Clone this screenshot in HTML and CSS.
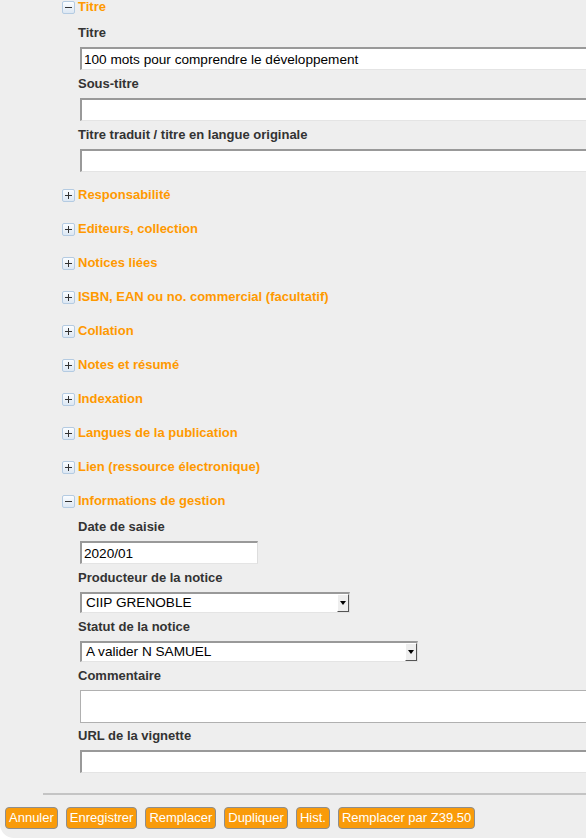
FILE: index.html
```html
<!DOCTYPE html>
<html lang="fr">
<head>
<meta charset="utf-8">
<title>Notice</title>
<link rel="stylesheet" href="styles.css">
</head>
<body>
<div class="page">
  <div class="form">
    <section class="sec open">
      <div class="sec-head"><span class="tog"><svg viewBox="0 0 13 13" width="13" height="13"><path d="M3 6.5h7" stroke="#333" stroke-width="1"/></svg></span><span>Titre</span></div>
      <div class="sec-body">
        <div class="lbl">Titre</div>
        <input class="inp wide" type="text" value="100 mots pour comprendre le développement">
        <div class="lbl">Sous-titre</div>
        <input class="inp wide" type="text" value="">
        <div class="lbl">Titre traduit / titre en langue originale</div>
        <input class="inp wide last" type="text" value="">
      </div>
    </section>

    <section class="sec"><div class="sec-head"><span class="tog"><svg viewBox="0 0 13 13" width="13" height="13"><path d="M3 6.5h7M6.5 3v7" stroke="#333" stroke-width="1"/></svg></span><span>Responsabilité</span></div></section>
    <section class="sec"><div class="sec-head"><span class="tog"><svg viewBox="0 0 13 13" width="13" height="13"><path d="M3 6.5h7M6.5 3v7" stroke="#333" stroke-width="1"/></svg></span><span>Editeurs, collection</span></div></section>
    <section class="sec"><div class="sec-head"><span class="tog"><svg viewBox="0 0 13 13" width="13" height="13"><path d="M3 6.5h7M6.5 3v7" stroke="#333" stroke-width="1"/></svg></span><span>Notices liées</span></div></section>
    <section class="sec"><div class="sec-head"><span class="tog"><svg viewBox="0 0 13 13" width="13" height="13"><path d="M3 6.5h7M6.5 3v7" stroke="#333" stroke-width="1"/></svg></span><span>ISBN, EAN ou no. commercial (facultatif)</span></div></section>
    <section class="sec"><div class="sec-head"><span class="tog"><svg viewBox="0 0 13 13" width="13" height="13"><path d="M3 6.5h7M6.5 3v7" stroke="#333" stroke-width="1"/></svg></span><span>Collation</span></div></section>
    <section class="sec"><div class="sec-head"><span class="tog"><svg viewBox="0 0 13 13" width="13" height="13"><path d="M3 6.5h7M6.5 3v7" stroke="#333" stroke-width="1"/></svg></span><span>Notes et résumé</span></div></section>
    <section class="sec"><div class="sec-head"><span class="tog"><svg viewBox="0 0 13 13" width="13" height="13"><path d="M3 6.5h7M6.5 3v7" stroke="#333" stroke-width="1"/></svg></span><span>Indexation</span></div></section>
    <section class="sec"><div class="sec-head"><span class="tog"><svg viewBox="0 0 13 13" width="13" height="13"><path d="M3 6.5h7M6.5 3v7" stroke="#333" stroke-width="1"/></svg></span><span>Langues de la publication</span></div></section>
    <section class="sec"><div class="sec-head"><span class="tog"><svg viewBox="0 0 13 13" width="13" height="13"><path d="M3 6.5h7M6.5 3v7" stroke="#333" stroke-width="1"/></svg></span><span>Lien (ressource électronique)</span></div></section>

    <section class="sec open final">
      <div class="sec-head"><span class="tog"><svg viewBox="0 0 13 13" width="13" height="13"><path d="M3 6.5h7" stroke="#333" stroke-width="1"/></svg></span><span>Informations de gestion</span></div>
      <div class="sec-body">
        <div class="lbl">Date de saisie</div>
        <input class="inp date" type="text" value="2020/01">
        <div class="lbl">Producteur de la notice</div>
        <div class="sel sel-prod"><span class="sel-txt">CIIP GRENOBLE</span><span class="arr"></span></div>
        <div class="lbl">Statut de la notice</div>
        <div class="sel sel-stat"><span class="sel-txt">A valider N SAMUEL</span><span class="arr"></span></div>
        <div class="lbl">Commentaire</div>
        <textarea class="area"></textarea>
        <div class="lbl">URL de la vignette</div>
        <input class="inp wide last" type="text" value="">
      </div>
    </section>
  </div>
  <div class="rule"></div>
  <div class="buttons">
    <button class="btn">Annuler</button>
    <button class="btn">Enregistrer</button>
    <button class="btn">Remplacer</button>
    <button class="btn">Dupliquer</button>
    <button class="btn">Hist.</button>
    <button class="btn">Remplacer par Z39.50</button>
  </div>
</div>
</body>
</html>
```

FILE: styles.css
```css
html, body {
  margin: 0;
  padding: 0;
  background: #fff;
  overflow: hidden;
}
body {
  font-family: "Liberation Sans", Arial, sans-serif;
  font-size: 13px;
  color: #333;
}
.page {
  width: 620px;
  background: #eee;
  border-bottom-left-radius: 14px;
  padding-bottom: 9px;
}
.form {
  padding-left: 62px;
  padding-top: 0;
  margin-top: -1px;
}
.sec {
  margin-bottom: 18px;
}
.sec.open {
  margin-bottom: 9px;
}
.sec.final {
  margin-bottom: 14px;
}
.sec-head {
  display: flex;
  align-items: center;
  gap: 3px;
  height: 16px;
  line-height: 16px;
  font-weight: bold;
  color: #f90;
}
.tog {
  display: block;
  width: 13px;
  height: 13px;
  box-sizing: border-box;
  border: 1px solid #b4cbe2;
  border-radius: 2px;
  background: linear-gradient(#fbfdff, #dce7f3);
  position: relative;
}
.tog svg {
  position: absolute;
  left: -1px;
  top: -1px;
}
.sec-body {
  padding-top: 10px;
  padding-left: 16px;
  display: flex;
  flex-direction: column;
  align-items: flex-start;
}
.lbl {
  font-weight: bold;
  line-height: 16px;
  height: 16px;
  margin-bottom: 6px;
  color: #333;
}
.inp {
  display: block;
  box-sizing: border-box;
  height: 23px;
  margin: 0 0 6px 2px;
  padding: 0 2px;
  border-top: 2px solid #999;
  border-left: 2px solid #999;
  border-right: 1px solid #ddd;
  border-bottom: 1px solid #e4e4e4;
  background: #fff;
  font-family: "Liberation Sans", Arial, sans-serif;
  font-size: 13.6px;
  color: #000;
  outline: none;
}
.inp.wide {
  width: 540px;
}
.inp.date {
  width: 178px;
}
.sel {
  display: flex;
  align-items: stretch;
  box-sizing: border-box;
  height: 21px;
  margin: 0 0 6px 2px;
  border-top: 2px solid #999;
  border-left: 2px solid #999;
  border-right: 1px solid #ddd;
  border-bottom: 1px solid #e4e4e4;
  background: #fff;
  color: #000;
  font-size: 13.6px;
}
.sel-prod { width: 270px; }
.sel-stat { width: 338px; }
.sel-txt {
  flex: 1;
  padding-left: 4px;
  line-height: 18px;
  white-space: nowrap;
}
.arr {
  width: 12px;
  box-sizing: border-box;
  background: #eee;
  border-left: 1px solid #fff;
  border-top: 1px solid #fff;
  border-right: 1px solid #555;
  border-bottom: 1px solid #555;
  display: flex;
  align-items: center;
  justify-content: center;
}
.arr::after {
  content: "";
  width: 0;
  height: 0;
  border-left: 3px solid transparent;
  border-right: 3px solid transparent;
  border-top: 4px solid #000;
}
.area {
  display: block;
  box-sizing: border-box;
  width: 540px;
  height: 33px;
  margin: 0 0 5px 2px;
  border: 1px solid #b0b0b0;
  background: #fff;
  resize: none;
  padding: 0;
  outline: none;
}
.rule {
  margin-left: 43px;
  height: 2px;
  background: #c4c4c4;
}
.buttons {
  display: flex;
  gap: 8px;
  padding: 12px 0 0 5px;
}
.btn {
  box-sizing: border-box;
  height: 22px;
  padding: 0 3px;
  margin: 0;
  border: 1px solid #8e8e8e;
  border-radius: 4px;
  background: #f99b0a;
  color: #fff;
  font-family: "Liberation Sans", Arial, sans-serif;
  font-size: 13px;
  line-height: 20px;
}
```
